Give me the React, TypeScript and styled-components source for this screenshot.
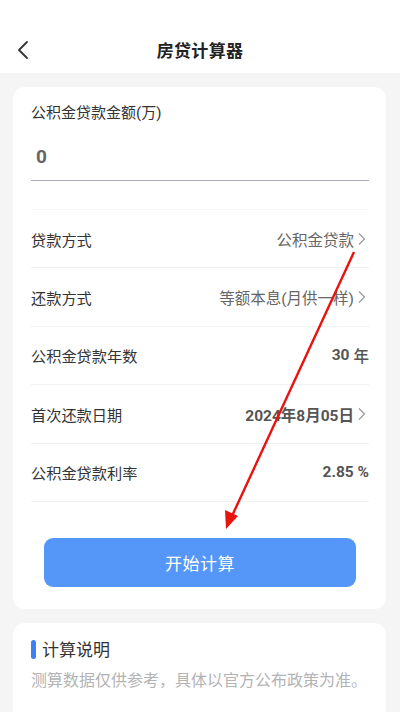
import React from "react";
import styled, { createGlobalStyle } from "styled-components";

const Global = createGlobalStyle`
  html, body { margin: 0; padding: 0; background: #f5f5f5; }
  body { font-family: Roboto, "Noto Sans CJK SC", sans-serif; -webkit-font-smoothing: antialiased; }
  * { box-sizing: border-box; }
`;

const Page = styled.div`
  position: relative;
  width: 400px;
  height: 712px;
  overflow: hidden;
  background: #f5f5f5;
  display: flex;
  flex-direction: column;
`;

const Header = styled.header`
  flex: none;
  height: 73px;
  background: #fff;
  display: flex;
  align-items: center;
  justify-content: center;
  position: relative;
  padding-top: 25px;
`;

const BackBtn = styled.div`
  position: absolute;
  left: 16px;
  top: 40px;
  width: 16px;
  height: 20px;
  display: flex;
`;

const Title = styled.h1`
  margin: 0;
  font-size: 17px;
  font-weight: 700;
  color: #222;
  letter-spacing: 0.3px;
`;

const Content = styled.main`
  display: flex;
  flex-direction: column;
  gap: 14px;
  padding: 14px 14px 0 13px;
`;

const Card = styled.section`
  background: #fff;
  border-radius: 12px;
  padding: 0 17px 0 18px;
  display: flex;
  flex-direction: column;
`;

const FieldLabel = styled.div`
  margin-top: 16px;
  font-size: 15px;
  color: #333;
  line-height: 20px;
`;

const AmountInput = styled.div`
  margin-top: 24px;
  padding: 0 0 13px 5px;
  font-size: 19px;
  font-weight: 700;
  color: #666;
  line-height: 20px;
  border-bottom: 1px solid #a9acb4;
`;

const Spacer = styled.div<{ $h: number }>`
  height: ${(p) => p.$h}px;
  border-bottom: 1px solid #f7f7f7;
`;

const Row = styled.div`
  height: 58.4px;
  display: flex;
  align-items: center;
  justify-content: space-between;
  border-bottom: 1px solid #f1f1f1;
`;

const RowLabel = styled.span`
  font-size: 15.2px;
  color: #333;
`;

const RowValue = styled.span<{ $bold?: boolean }>`
  display: flex;
  align-items: center;
  gap: 4px;
  font-size: 15.5px;
  color: ${(p) => (p.$bold ? "#555" : "#666")};
  font-weight: ${(p) => (p.$bold ? 700 : 400)};
`;

const Unit = styled.span`
  font-weight: 500;
`;

const Chevron = styled.svg`
  width: 8px;
  height: 14px;
  flex: none;
  margin-right: 3px;
`;

const Button = styled.button`
  margin: 36px 13px 22px 13px;
  height: 49px;
  border: none;
  border-radius: 9px;
  background: #5596f9;
  color: #fff;
  font-size: 17px;
  font-family: inherit;
  letter-spacing: 0.5px;
`;

const NoteTitle = styled.div`
  margin-top: 17px;
  display: flex;
  align-items: center;
  gap: 6px;
  font-size: 17px;
  color: #333;
  line-height: 20px;
`;

const Bar = styled.span`
  width: 5px;
  height: 19px;
  border-radius: 3px;
  background: #3e80f6;
`;

const NoteText = styled.div`
  margin-top: 11px;
  font-size: 16px;
  color: #b3b3b3;
  line-height: 20px;
  padding-bottom: 30px;
`;

const Arrow = styled.svg`
  position: absolute;
  left: 0;
  top: 0;
  width: 400px;
  height: 712px;
  pointer-events: none;
`;

const RightChevron = () => (
  <Chevron viewBox="0 0 8 14">
    <path d="M1 1.5 L6.5 7 L1 12.5" fill="none" stroke="#9a9a9a" strokeWidth="1.2" />
  </Chevron>
);

export default function App() {
  return (
    <>
      <Global />
      <Page>
        <Header>
          <BackBtn>
            <svg width="16" height="20" viewBox="0 0 16 20">
              <path d="M11 2 L3 10 L11 18" fill="none" stroke="#333" strokeWidth="1.8" strokeLinecap="round" strokeLinejoin="round" />
            </svg>
          </BackBtn>
          <Title>房贷计算器</Title>
        </Header>
        <Content>
          <Card>
            <FieldLabel>公积金贷款金额(万)</FieldLabel>
            <AmountInput>0</AmountInput>
            <Spacer $h={29} />
            <Row>
              <RowLabel>贷款方式</RowLabel>
              <RowValue>公积金贷款<RightChevron /></RowValue>
            </Row>
            <Row>
              <RowLabel>还款方式</RowLabel>
              <RowValue>等额本息(月供一样)<RightChevron /></RowValue>
            </Row>
            <Row>
              <RowLabel>公积金贷款年数</RowLabel>
              <RowValue $bold>30 <Unit>年</Unit></RowValue>
            </Row>
            <Row>
              <RowLabel>首次还款日期</RowLabel>
              <RowValue $bold>2024年8月05日<RightChevron /></RowValue>
            </Row>
            <Row>
              <RowLabel>公积金贷款利率</RowLabel>
              <RowValue $bold>2.85 %</RowValue>
            </Row>
            <Button>开始计算</Button>
          </Card>
          <Card>
            <NoteTitle><Bar />计算说明</NoteTitle>
            <NoteText>测算数据仅供参考，具体以官方公布政策为准。</NoteText>
          </Card>
        </Content>
        <Arrow viewBox="0 0 400 712">
          <line x1="354" y1="252" x2="232" y2="516" stroke="#e8130f" strokeWidth="2.4" />
          <polygon points="226,529 225,510 238,516" fill="#e8130f" />
        </Arrow>
      </Page>
    </>
  );
}
